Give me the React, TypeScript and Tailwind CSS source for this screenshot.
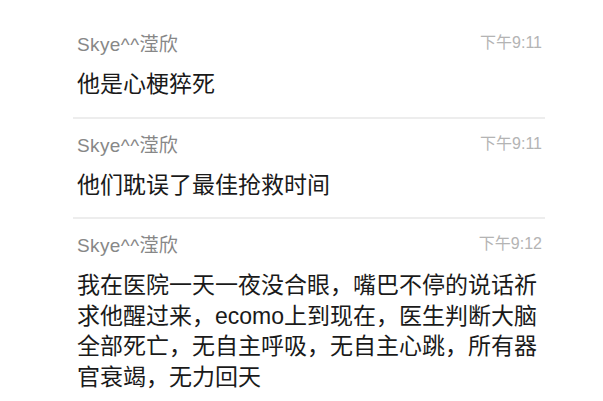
const messages = [
  { name: 'Skye^^滢欣', time: '下午9:11', text: '他是心梗猝死' },
  { name: 'Skye^^滢欣', time: '下午9:11', text: '他们耽误了最佳抢救时间' },
  {
    name: 'Skye^^滢欣',
    time: '下午9:12',
    text: '我在医院一天一夜没合眼，嘴巴不停的说话祈求他醒过来，ecomo上到现在，医生判断大脑全部死亡，无自主呼吸，无自主心跳，所有器官衰竭，无力回天',
  },
];

export default function App() {
  return (
    <div
      className="w-[603px] h-[401px] overflow-hidden bg-white"
      style={{ fontFamily: '"Liberation Sans", "Noto Sans CJK SC", sans-serif' }}
    >
      <div className="ml-[73px] mt-[18px] w-[472px]">
        {messages.map((m, i) => (
          <div key={i} className="border-b-2 border-[#ededed] pl-[4px] pr-[3px] pt-[15px] pb-[17px]">
            <div className="flex items-start justify-between">
              <span className="text-[19px] leading-[24px] tracking-[0.4px] text-[#878787]">{m.name}</span>
              <span className="text-[16px] leading-[20px] text-[#b4b4b4]">{m.time}</span>
            </div>
            <p className="mt-[12px] text-[23px] leading-[30.5px] text-[#1a1a1a]">{m.text}</p>
          </div>
        ))}
      </div>
    </div>
  );
}
